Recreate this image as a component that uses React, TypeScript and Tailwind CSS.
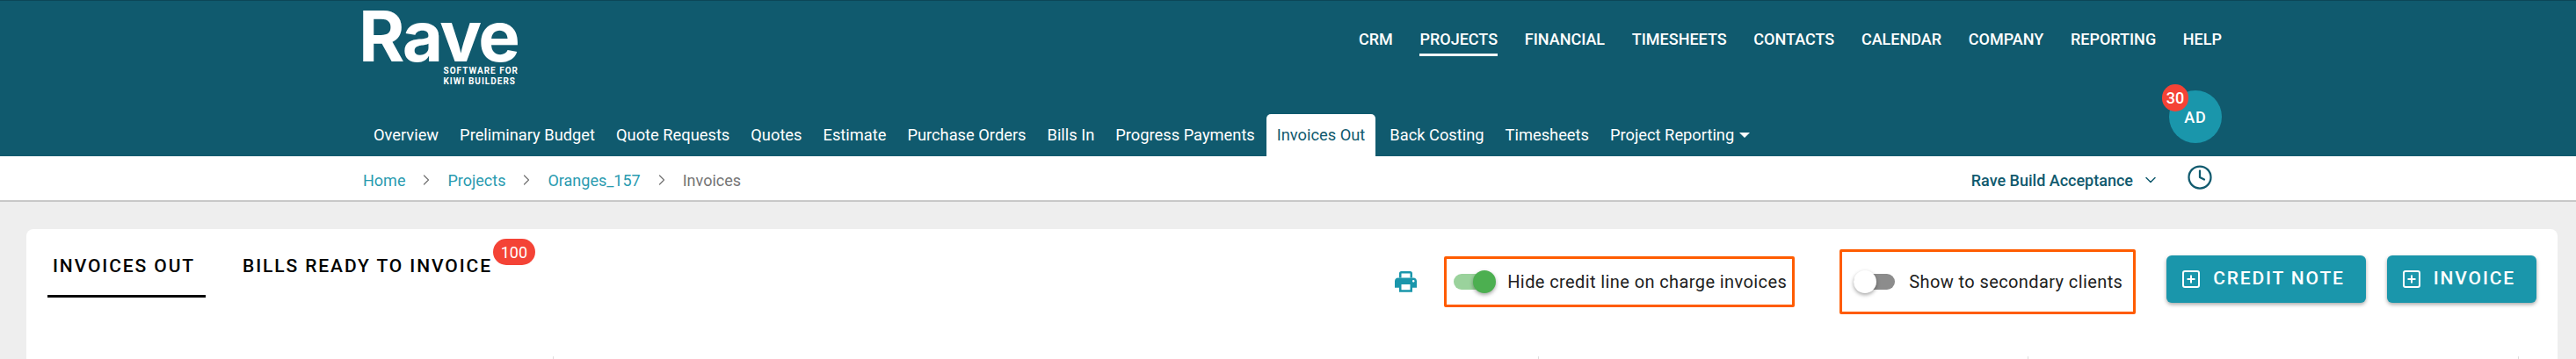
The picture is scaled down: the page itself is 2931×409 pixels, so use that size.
import { ChevronDown, ChevronRight, Clock } from "lucide-react";

const TOP_NAV = ["CRM", "PROJECTS", "FINANCIAL", "TIMESHEETS", "CONTACTS", "CALENDAR", "COMPANY", "REPORTING", "HELP"];
const SUB_NAV = [
  "Overview",
  "Preliminary Budget",
  "Quote Requests",
  "Quotes",
  "Estimate",
  "Purchase Orders",
  "Bills In",
  "Progress Payments",
  "Invoices Out",
  "Back Costing",
  "Timesheets",
];
const CRUMBS = ["Home", "Projects", "Oranges_157"];

function Toggle({ on }: { on: boolean }) {
  return (
    <div className={`relative h-[18px] w-[47px] rounded-full ${on ? "bg-[#9ad29c]" : "bg-[#8c8c8c]"}`}>
      <div
        className={`absolute top-[-4px] h-[26px] w-[26px] rounded-full shadow-[0_2px_4px_rgba(0,0,0,0.35)] ${
          on ? "right-[-1px] bg-[#4caf50]" : "left-0 bg-white"
        }`}
      />
    </div>
  );
}

function AddIcon() {
  return (
    <svg viewBox="0 0 20 20" className="h-[20px] w-[20px]" fill="none" stroke="currentColor">
      <rect x="1" y="1" width="18" height="18" rx="2" strokeWidth="2" />
      <path d="M10 5.5v9M5.5 10h9" strokeWidth="2" />
    </svg>
  );
}

function PrintIcon() {
  return (
    <svg viewBox="2 2 20 20" className="mr-[31px] h-[25px] w-[25px] text-[#1a96ab]">
      <path
        fillRule="evenodd"
        fill="currentColor"
        d="M19 8H5c-1.66 0-3 1.34-3 3v6h4v4h12v-4h4v-6c0-1.66-1.34-3-3-3zm-3 11H8v-5h8v5zm3-7c-.55 0-1-.45-1-1s.45-1 1-1 1 .45 1 1-.45 1-1 1z"
      />
      <path d="M7 8V4a1 1 0 0 1 1-1h8a1 1 0 0 1 1 1v4" fill="none" stroke="currentColor" strokeWidth="2" />
    </svg>
  );
}

function ActionButton({ label }: { label: string }) {
  return (
    <button className="flex h-[54px] items-center gap-[15px] rounded-[6px] bg-[#1a96ab] pr-[24px] pl-[18px] text-[21px] font-medium tracking-[1.85px] text-white shadow-[0_2px_4px_rgba(0,0,0,0.35)]">
      <AddIcon />
      {label}
    </button>
  );
}

export default function App() {
  return (
    <div className="flex h-[409px] w-full flex-col overflow-hidden bg-[#eeeeee] font-['Roboto',sans-serif]">
      {/* Header */}
      <div className="flex h-[178px] flex-col border-t border-[#0c4657] bg-[#105a6e] pr-[403px] pl-[413px] text-white">
        <div className="flex">
          <div className="flex w-[177px] flex-col items-end">
            <div className="h-[74px] w-full -translate-x-[5px] font-['Inter',sans-serif] text-[80px] leading-[80px] font-bold tracking-[-2.5px]">
              Rave
            </div>
            <div className="text-left text-[10px] leading-[12px] font-bold tracking-[1px]">
              <div>SOFTWARE FOR</div>
              <div>KIWI BUILDERS</div>
            </div>
          </div>
          <nav className="mt-[30px] ml-auto flex h-[33px] gap-[30.7px] text-[18px] font-medium">
            {TOP_NAV.map((item) => (
              <a key={item} className={`h-[33px] leading-[27px] ${item === "PROJECTS" ? "border-b-[3px] border-white" : ""}`}>
                {item}
              </a>
            ))}
          </nav>
        </div>
        <div className="mt-auto flex items-end">
          <nav className="flex h-[48px] text-[18.3px]">
            {SUB_NAV.map((item) => (
              <a
                key={item}
                className={`flex items-center rounded-t-[5px] px-[12px] ${item === "Invoices Out" ? "mr-[4px] ml-[1px] bg-white text-[#105a6e]" : ""}`}
              >
                {item}
              </a>
            ))}
            <a className="flex items-center gap-[6px] px-[12px]">
              Project Reporting
              <span className="h-0 w-0 border-x-[6px] border-t-[6px] border-x-transparent border-t-white" />
            </a>
          </nav>
          <div className="relative mb-[15px] ml-auto flex h-[60px] w-[60px] items-center justify-center rounded-full bg-[#1a96ab] text-[18px] font-medium tracking-[1px]">
            AD
            <span className="absolute top-[-7px] left-[-8px] flex h-[31px] w-[30px] items-center justify-center rounded-full bg-[#f44336] text-[18px] tracking-normal">
              30
            </span>
          </div>
        </div>
      </div>

      {/* Breadcrumbs */}
      <div className="flex h-[52px] items-center border-b-2 border-[#c8c8c8] bg-white pt-[4px] pr-[413px] pl-[413px] text-[18px]">
        {CRUMBS.map((crumb) => (
          <div key={crumb} className="flex items-center text-[#2a9bb0]">
            {crumb}
            <ChevronRight className="mx-[14px] h-[20px] w-[20px] text-[#757575]" strokeWidth={1.5} />
          </div>
        ))}
        <span className="text-[#757575]">Invoices</span>
        <div className="ml-auto flex items-center text-[#105a6e]">
          <span className="font-medium">Rave Build Acceptance</span>
          <ChevronDown className="ml-[10px] h-[20px] w-[20px]" strokeWidth={1.8} />
          <Clock className="mb-[6px] ml-[31px] h-[30px] w-[30px]" strokeWidth={1.8} />
        </div>
      </div>

      {/* Card */}
      <div className="relative mt-[31px] mr-[21px] ml-[30px] flex flex-1 items-start rounded-t-[8px] bg-white px-[24px]">
        <div className="flex text-[21px] font-medium tracking-[1.9px] text-black">
          <div className="flex h-[78px] w-[180px] items-center border-b-[3px] border-black pt-[10px] pl-[6px]">INVOICES OUT</div>
          <div className="relative ml-[42px] flex h-[78px] items-center pt-[7px]">
            BILLS READY TO INVOICE
            <span className="absolute top-[11px] right-[-49px] flex h-[30px] w-[48px] items-center justify-center rounded-full bg-[#f44336] text-[18px] font-normal tracking-normal text-white">
              100
            </span>
          </div>
        </div>
        <div className="ml-auto flex items-center pt-[23px]">
          <PrintIcon />
          <div className="flex h-[58px] w-[399px] items-center gap-[14px] rounded-[2px] border-[3px] border-[#ff5c00] pl-[8px] text-[20px] tracking-[0.4px] whitespace-nowrap text-[#212121]">
            <Toggle on />
            Hide credit line on charge invoices
          </div>
          <div className="ml-[51px] flex h-[74px] w-[337px] items-center gap-[16px] rounded-[2px] border-[3px] border-[#ff5c00] pl-[13px] text-[20px] tracking-[0.4px] whitespace-nowrap text-[#212121]">
            <Toggle on={false} />
            Show to secondary clients
          </div>
          <div className="mb-[7px] ml-[35px] flex gap-[24px]">
            <ActionButton label="CREDIT NOTE" />
            <ActionButton label="INVOICE" />
          </div>
        </div>
        {/* tops of the table's column rules, cut off by the bottom of the page */}
        <span className="absolute bottom-0 left-[599px] h-[3px] w-px bg-[#dddddd]" />
        <span className="absolute bottom-0 left-[1720px] h-[3px] w-px bg-[#dddddd]" />
        <span className="absolute bottom-0 left-[2277px] h-[3px] w-px bg-[#dddddd]" />
        <span className="absolute bottom-0 left-[2835px] h-[3px] w-px bg-[#dddddd]" />
      </div>
    </div>
  );
}
